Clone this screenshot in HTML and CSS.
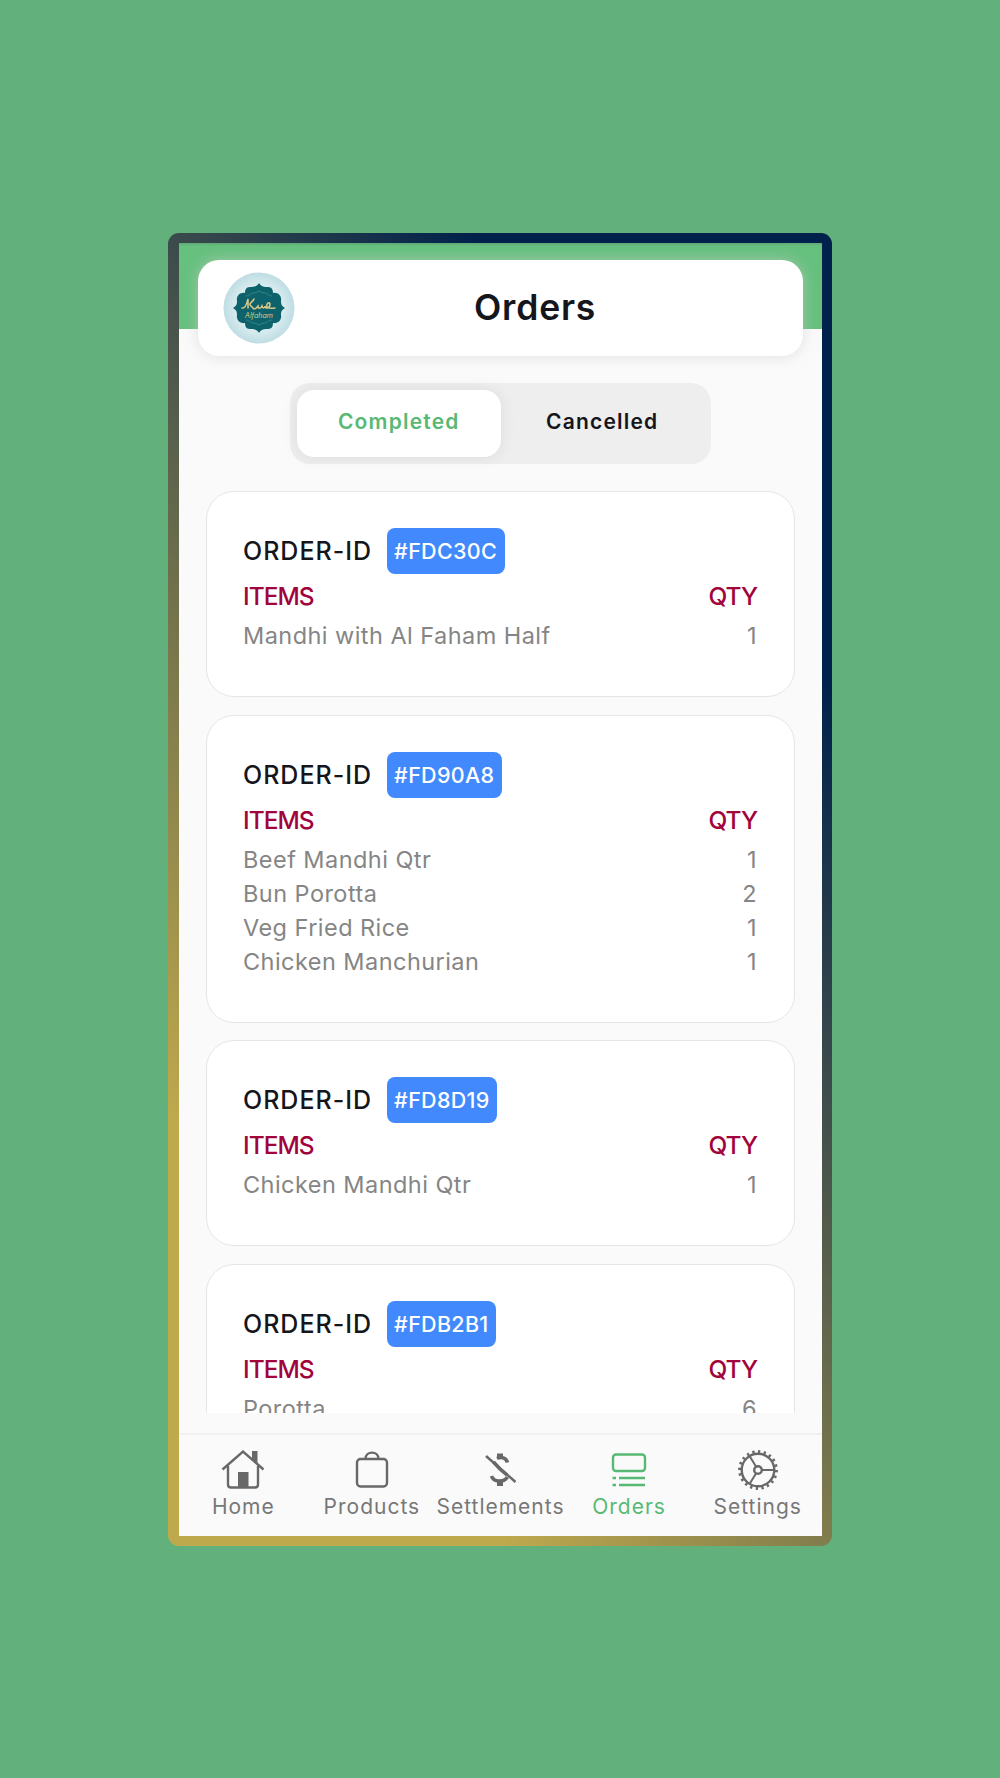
FILE: index.html
```html
<!DOCTYPE html>
<html lang="en">
<head>
    <meta charset="utf-8">
    <meta name="viewport" content="width=device-width, initial-scale=1.0">
    <title>Orders</title>
    <link rel="stylesheet" href="styles.css">
</head>
<body>
    <div class="frame">
        <div class="screen">
            <div class="top">
                <header class="header">
                    <svg class="logo" viewBox="0 0 72 72">
                        <defs>
                            <radialGradient id="disc">
                                <stop offset="0.5" stop-color="#e4f2f5"/>
                                <stop offset="1" stop-color="#bedde3"/>
                            </radialGradient>
                        </defs>
                        <circle cx="36" cy="36" r="35.5" fill="url(#disc)"/>
                        <path fill="#0e626b" d="M36 11c2 4 6 4 9 4 4 0 5 3 5 6 5-1 9 3 8 8 0 4 1 5 4 7-3 2-4 3-4 7 1 5-3 9-8 8 0 3-1 6-5 6-3 0-7 0-9 4-2-4-6-4-9-4-4 0-5-3-5-6-5 1-9-3-8-8 0-4-1-5-4-7 3-2 4-3 4-7-1-5 3-9 8-8 0-3 1-6 5-6 3 0 7 0 9-4z"/>
                        <path fill="none" stroke="#3f8a88" stroke-width="0.8" d="M23 24c4 0 5-4 9-3l4-2 4 2c4-1 5 3 9 3M23 48c4 0 5 4 9 3l4 2 4-2c4 1 5-3 9-3"/>
                        <path fill="none" stroke="#dcc989" stroke-width="1.5" stroke-linecap="round" d="M19 36c4 1 5-6 6-9l0 9M31 27c-1 3-5 4-4 6l4 4c3 0 3-2 4-3 0 3 3 3 4 0 1 3 3 2 3 0 0 3 5 3 5-2-1-3-4 0-3 3 2 2 5 1 8 1"/>
                        <text x="36" y="45.500" text-anchor="middle" class="logo-text">Alfaham</text>
                    </svg>
                    <h1>Orders</h1>
                </header>
            </div>

            <div class="tabs">
                <div class="tab active">Completed</div>
                <div class="tab">Cancelled</div>
            </div>

            <main class="orders">
                <section class="card">
                    <div class="order-id">ORDER-ID <span class="badge">#FDC30C</span></div>
                    <div class="row heading"><span>ITEMS</span><span>QTY</span></div>
                    <div class="row"><span>Mandhi with Al Faham Half</span><span>1</span></div>
                </section>
                <section class="card">
                    <div class="order-id">ORDER-ID <span class="badge">#FD90A8</span></div>
                    <div class="row heading"><span>ITEMS</span><span>QTY</span></div>
                    <div class="row"><span>Beef Mandhi Qtr</span><span>1</span></div>
                    <div class="row"><span>Bun Porotta</span><span>2</span></div>
                    <div class="row"><span>Veg Fried Rice</span><span>1</span></div>
                    <div class="row"><span>Chicken Manchurian</span><span>1</span></div>
                </section>
                <section class="card">
                    <div class="order-id">ORDER-ID <span class="badge">#FD8D19</span></div>
                    <div class="row heading"><span>ITEMS</span><span>QTY</span></div>
                    <div class="row"><span>Chicken Mandhi Qtr</span><span>1</span></div>
                </section>
                <section class="card">
                    <div class="order-id">ORDER-ID <span class="badge">#FDB2B1</span></div>
                    <div class="row heading"><span>ITEMS</span><span>QTY</span></div>
                    <div class="row"><span>Porotta</span><span>6</span></div>
                </section>
            </main>

            <nav class="nav">
                <a class="nav-item">
                    <svg viewBox="0 0 44 44">
                        <path d="M1.500 21.500 22 3.500l20.500 18M7 18v18.500q0 3 3 3h24q3 0 3-3V18"/>
                        <path class="solid" d="M31 3h5.500v14L31 12zM17 24h10.500v15H17z"/>
                    </svg>
                    <span>Home</span>
                </a>
                <a class="nav-item">
                    <svg viewBox="0 0 44 44">
                        <rect x="7" y="11" width="30" height="27.500" rx="3.500"/>
                        <path d="M15.500 11C15.500 2.500 28.500 2.500 28.500 11"/>
                    </svg>
                    <span>Products</span>
                </a>
                <a class="nav-item">
                    <svg viewBox="0 0 44 44">
                        <path d="M8 8l29.500 26"/>
                        <path class="thick" d="M15.500 14l6.500 7 7 6M19 10.500c4-2 9-1 10.500 4M13.500 28c2 6 12 7 16 1"/>
                        <path class="solid" d="M19 5.500h6V11h-6zM19 32h6v6h-6z"/>
                    </svg>
                    <span>Settlements</span>
                </a>
                <a class="nav-item current">
                    <svg viewBox="0 0 44 44">
                        <rect x="6" y="6.500" width="32" height="16.500" rx="3"/>
                        <path d="M12 30h26M12 37h26M5.500 30h3.500M5.500 37h3.500"/>
                    </svg>
                    <span>Orders</span>
                </a>
                <a class="nav-item">
                    <svg viewBox="0 0 44 44">
                        <circle cx="22" cy="22" r="16.300"/>
                        <circle class="teeth" cx="22" cy="22" r="18.400" pathLength="80"/>
                        <circle cx="22" cy="22" r="3.800"/>
                        <path class="thin" d="M25.800 22h13M20 18.500 13.500 8M20 25.500 13.500 36"/>
                    </svg>
                    <span>Settings</span>
                </a>
            </nav>
        </div>
    </div>
</body>
</html>
```
FILE: styles.css
```css
* {
    box-sizing: border-box;
}
body {
    margin: 0;
    height: 1778px;
    overflow: hidden;
    background: #62b17d;
    color: #14161b;
    font-family: Inter, "Open Sans", sans-serif;
}
.frame {
    width: 664px;
    height: 1312.5px;
    margin: 233px 0 0 168px;
    padding: 10px 10px 10px 11px;
    border-radius: 11px;
    background: linear-gradient(52deg, #bfa94d 20%, #00214b 79%);
}
.screen {
    height: 100%;
    display: flex;
    flex-direction: column;
    background: #fafafa;
}
.top {
    height: 86px;
    padding: 17px 19px 0;
    background: linear-gradient(#5fa878, #66c07e 3px);
}
.header {
    display: flex;
    align-items: center;
    height: 96px;
    padding-left: 25px;
    background: #fff;
    border-radius: 21px;
    box-shadow: 0 0 14px rgba(205, 205, 205, 0.6);
}
.logo {
    width: 72px;
    height: 72px;
}
.logo-text {
    font-size: 7px;
    font-style: italic;
    fill: #dcc989;
}
h1 {
    margin: 0 0 0 179px;
    font-size: 35.5px;
    font-weight: 600;
    line-height: 1;
    letter-spacing: 0.8px;
}
.tabs {
    display: flex;
    width: 421px;
    height: 81px;
    margin: 54px auto 0;
    padding: 7px;
    background: #eee;
    border-radius: 20px;
}
.tab {
    width: 204px;
    height: 67px;
    line-height: 63px;
    text-align: center;
    font-size: 21px;
    font-weight: 600;
    letter-spacing: 1.2px;
}
.tab.active {
    background: #fff;
    border-radius: 17px;
    color: #58b974;
    box-shadow: 0 0 16px rgba(0, 0, 0, 0.08);
}
.orders {
    height: 922px;
    margin-top: 27px;
    padding: 0 27px;
    overflow: hidden;
}
.card {
    margin-bottom: 17.7px;
    padding: 36px 37px 43px 36px;
    background: #fff;
    border: 1.5px solid #e5e5e5;
    border-radius: 28px;
}
.order-id {
    display: flex;
    align-items: center;
    gap: 14.5px;
    height: 46px;
    font-size: 25px;
    font-weight: 500;
    letter-spacing: 1px;
}
.badge {
    padding: 0 7.5px;
    line-height: 46px;
    background: #4289fd;
    border-radius: 8px;
    color: #fff;
    font-size: 21.5px;
    letter-spacing: 0.3px;
}
.row {
    display: flex;
    justify-content: space-between;
    line-height: 34px;
    font-size: 23.5px;
    letter-spacing: 0.45px;
    color: #858585;
}
.row.heading {
    line-height: 45px;
    font-size: 24.5px;
    font-weight: 500;
    letter-spacing: -1px;
    color: #a1043b;
}
.nav {
    display: flex;
    height: 101px;
    margin-top: 20px;
    padding-top: 13px;
    border-top: 2px solid #f0f0f0;
}
.nav-item {
    flex: 1 0 0;
    display: flex;
    flex-direction: column;
    align-items: center;
    font-size: 21px;
    line-height: 30px;
    letter-spacing: 1px;
    color: #777;
}
.nav-item.current {
    color: #58b974;
}
.nav-item svg {
    width: 44px;
    height: 44px;
    fill: none;
    stroke: #686868;
    stroke-width: 2.4;
}
.nav-item.current svg {
    stroke: #58b974;
}
.nav-item .solid {
    fill: #686868;
    stroke: none;
}
.nav-item .thick {
    stroke-width: 3.6;
}
.nav-item .thin {
    stroke-width: 2;
}
.nav-item .teeth {
    stroke-width: 3;
    stroke-dasharray: 1.6 2.4;
}
```
